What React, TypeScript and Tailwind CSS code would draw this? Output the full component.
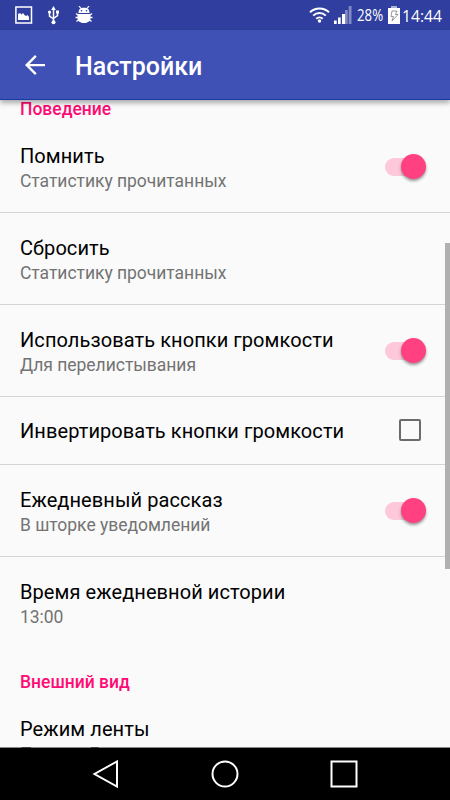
import { useState } from "react";

type ControlType = "switch" | "checkbox";

type Preference = {
  id: string;
  title: string;
  summary?: string;
  control?: ControlType;
  checked?: boolean;
};

const behaviour: Preference[] = [
  { id: "remember", title: "Помнить", summary: "Статистику прочитанных", control: "switch", checked: true },
  { id: "reset", title: "Сбросить", summary: "Статистику прочитанных" },
  { id: "volume", title: "Использовать кнопки громкости", summary: "Для перелистывания", control: "switch", checked: true },
  { id: "invert", title: "Инвертировать кнопки громкости", control: "checkbox", checked: false },
  { id: "daily", title: "Ежедневный рассказ", summary: "В шторке уведомлений", control: "switch", checked: true },
  { id: "time", title: "Время ежедневной истории", summary: "13:00" }
];

const appearance: Preference[] = [{ id: "feed", title: "Режим ленты", summary: "Полные Б" }];

function StatusBar() {
  return (
    <div className="flex h-[30px] shrink-0 items-center justify-between bg-[#303f9f] pr-2 pl-[14px] text-white">
      <div className="flex items-center">
        <svg width="19" height="18" viewBox="0 0 19 18">
          <rect x="1.9" y="1" width="15.6" height="16" fill="none" stroke="currentColor" strokeWidth="1.5" />
          <path d="M4 14V8l2-1 1.500 1.500L9 7l1.500 2 1.500 1 1.500-1L15 11v3z" fill="currentColor" />
        </svg>
        <svg className="ml-[14px]" width="13" height="19" viewBox="0 0 13 19">
          <path d="M6.500 3v12M2.500 6v4l4 3M10.500 6v3.500l-4 3" fill="none" stroke="currentColor" strokeWidth="1.500" />
          <path d="M6.500 0l2.300 4H4.200zM9 4.500h3v3H9z" fill="currentColor" />
          <circle cx="2.500" cy="6" r="1.600" fill="currentColor" />
          <circle cx="6.500" cy="16.300" r="2" fill="currentColor" />
        </svg>
        <svg className="ml-[15px]" width="18" height="18" viewBox="0 0 18 18">
          <path d="M4 0l2 2.500M14 0l-2 2.500" stroke="currentColor" strokeWidth="1.200" />
          <path d="M3.500 7C3.500 3.500 5 1.800 9 1.800s5.500 1.700 5.500 5.200zM2.500 8h13v4c0 3.500-3 5-6.500 5s-6.500-1.500-6.500-5z" fill="currentColor" />
          <path d="M1 7.500l2 1.500M17 7.500L15 9M.5 11.500h17M1.500 15.500L4 13.500M16.500 15.500L14 13.500" stroke="currentColor" strokeWidth="1.300" />
          <circle cx="6.500" cy="4.700" r=".8" fill="#303f9f" />
          <circle cx="11.500" cy="4.700" r=".8" fill="#303f9f" />
        </svg>
      </div>
      <div className="flex items-center">
        <svg className="-mt-[2px]" width="21" height="17" viewBox="0 0 21 17">
          <path d="M1 6.300a13.500 13.500 0 0 1 19 0M4.200 9.600a9 9 0 0 1 12.600 0M7.300 12.700a4.600 4.600 0 0 1 6.400 0" fill="none" stroke="currentColor" strokeWidth="2" />
          <circle cx="10.500" cy="15" r="1.700" fill="currentColor" />
        </svg>
        <svg className="ml-[3px]" width="19" height="18" viewBox="0 0 19 18">
          <path d="M1 14.500h2.700V18H1zM5 11.500h2.700V18H5zM9 8h3v10H9z" fill="currentColor" />
          <path d="M12 4h2.700v14H12zM15.700 0h2.800v18h-2.800z" fill="currentColor" opacity=".4" />
        </svg>
        <span className="ml-[5px] w-[27px] origin-left scale-x-[0.83] font-['Open_Sans',sans-serif] text-[16px] leading-none whitespace-nowrap">28%</span>
        <svg className="ml-1" width="12" height="18" viewBox="0 0 12 18">
          <path d="M3 0h6v3H3z" fill="currentColor" opacity=".6" />
          <path d="M0 2h12v16H0z" fill="currentColor" />
          <path d="M4 5h5L7.500 8.500H10L4 15l1.500-4.500H3z" fill="none" stroke="#8c8c8c" strokeWidth=".9" />
        </svg>
        <span className="ml-[2px] w-[40px] origin-left scale-x-[0.92] font-['Open_Sans',sans-serif] text-[17px] leading-none whitespace-nowrap">14:44</span>
      </div>
    </div>
  );
}

function Toolbar() {
  return (
    <header className="z-10 flex h-[70px] shrink-0 items-center border-b border-[#1739a5] bg-[#3f51b5] pl-[25px] text-white shadow-[0_3px_5px_rgba(0,0,0,0.32)]">
      <button type="button" className="mr-[30px]">
        <svg width="20" height="20" viewBox="4 4 16 16">
          <path d="M20 11.100H7.700l5.600-5.690L12 4l-8 8 8 8 1.300-1.410L7.700 12.900H20z" fill="currentColor" />
        </svg>
      </button>
      <h1 className="pt-[5px] text-[25px] leading-[30px] font-medium">Настройки</h1>
    </header>
  );
}

function Switch({ checked }: { checked: boolean }) {
  return (
    <span className="mr-6 flex h-[26px] w-[41px] items-center">
      <span className={`flex h-[18px] w-[34px] items-center rounded-full ${checked ? "bg-[#fcc8da]" : "bg-[#b9b9b9]"}`}>
        <span
          className={`size-[25px] shrink-0 rounded-full shadow-[0_2px_3px_rgba(0,0,0,0.4)] ${
            checked ? "ml-4 bg-[#ff4081]" : "bg-[#f1f1f1]"
          }`}
        />
      </span>
    </span>
  );
}

function Checkbox({ checked }: { checked: boolean }) {
  return (
    <span
      className={`mr-[29px] mb-[2px] size-[22px] rounded-[2px] border-2 ${checked ? "border-[#ff4081] bg-[#ff4081]" : "border-[#6b6b6b]"}`}
    />
  );
}

function PreferenceRow({ item, last }: { item: Preference; last: boolean }) {
  const [checked, setChecked] = useState(item.checked ?? false);

  return (
    <li
      onClick={() => setChecked(!checked)}
      className={`flex shrink-0 items-center justify-between border-b pl-5 ${item.summary ? "h-[92px]" : "h-[68px]"} ${
        last ? "border-transparent" : "border-[#d5d5d5]"
      }`}
    >
      <div className={`whitespace-nowrap ${item.summary ? "pt-1" : "pt-px"}`}>
        <p className="text-[20px] leading-[26px] tracking-[0.08px] text-black">{item.title}</p>
        {item.summary && <p className="text-[17.5px] leading-[25px] tracking-[-0.03px] text-[#737373]">{item.summary}</p>}
      </div>
      {item.control === "switch" && <Switch checked={checked} />}
      {item.control === "checkbox" && <Checkbox checked={checked} />}
    </li>
  );
}

function Category({ title, items }: { title: string; items: Preference[] }) {
  return (
    <section>
      <h2 className="h-[24px] pl-5 text-[17.5px] leading-[24px] font-medium text-[#ff0b75]">{title}</h2>
      <ul>
        {items.map((item, index) => (
          <PreferenceRow key={item.id} item={item} last={index === items.length - 1} />
        ))}
      </ul>
    </section>
  );
}

function NavigationBar() {
  return (
    <nav className="z-10 -mt-px flex h-[53px] shrink-0 items-center justify-center gap-[91px] border-t border-black/45 bg-black bg-clip-padding text-white">
      <svg width="28" height="28" viewBox="0 0 28 28" fill="none" stroke="currentColor" strokeWidth="2">
        <path d="M25 1.500v25L2.500 14z" />
      </svg>
      <svg width="28" height="28" viewBox="0 0 28 28" fill="none" stroke="currentColor" strokeWidth="2">
        <circle cx="14" cy="14" r="12.500" />
      </svg>
      <svg width="28" height="28" viewBox="0 0 28 28" fill="none" stroke="currentColor" strokeWidth="2">
        <path d="M1.500 1.500h25v25h-25z" />
      </svg>
    </nav>
  );
}

export default function App() {
  return (
    <div className="flex h-[800px] w-[450px] flex-col overflow-hidden bg-[#fafafa] font-[Roboto,sans-serif]">
      <StatusBar />
      <Toolbar />
      <main className="relative min-h-0 flex-1 overflow-hidden">
        <div className="-mt-[3px] flex flex-col gap-[21px]">
          <Category title="Поведение" items={behaviour} />
          <Category title="Внешний вид" items={appearance} />
        </div>
        {/* scrollbar thumb */}
        <div className="absolute top-[143px] right-0 h-[326px] w-[5px] bg-[#b0b0b0]" />
      </main>
      <NavigationBar />
    </div>
  );
}
